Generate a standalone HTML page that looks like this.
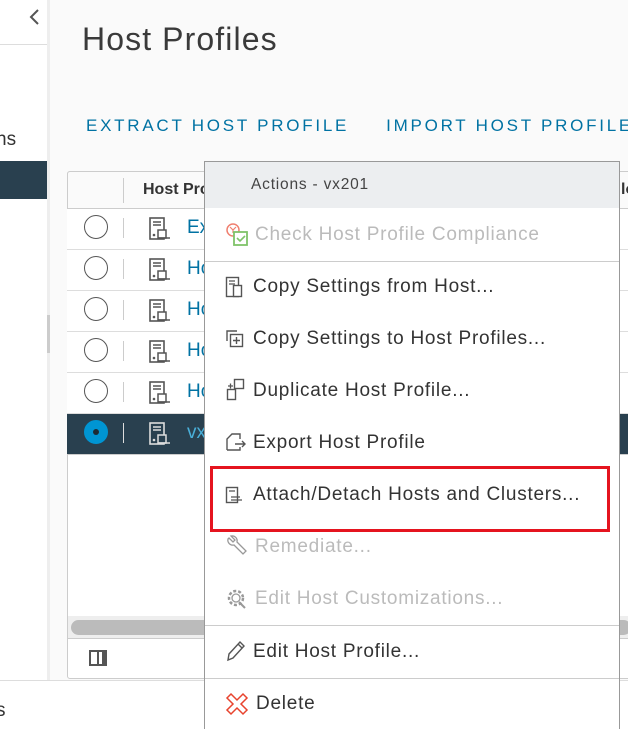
<!DOCTYPE html>
<html style="overflow:hidden;height:729px"><head><style>
*{margin:0;padding:0;box-sizing:border-box}
body{width:628px;height:729px;overflow:hidden;background:#fafafa;font-family:"Liberation Sans",sans-serif;position:relative;color:#333}
.abs{position:absolute}
.side{left:0;top:0;width:47px;height:680px;background:#fff}
.row{position:absolute;left:67px;width:600px;height:41px;border-bottom:1px solid #ddd;background:#fff}
.radio{position:absolute;left:17px;top:6px;width:24px;height:24px;border:1px solid #555;border-radius:50%;background:#fff}
.vsep{position:absolute;left:56px;top:9px;width:1px;height:20px;background:#ccc}
.hicon{position:absolute;left:81px;top:7px}
.rtext{position:absolute;left:120px;top:8px;font-size:19px;color:#0072a3}
.menu{left:204px;top:161px;width:416px;height:568px;background:#fff;border:1px solid #999;border-bottom:none;overflow:hidden}
.mi{position:absolute;left:48px;font-size:19px;letter-spacing:0.75px;color:#333;white-space:nowrap;margin-top:1px}
.dis{color:#bbb}
.ic{position:absolute;left:20px}
.sep{position:absolute;left:0;right:0;height:1px;background:#ccc}
</style></head><body>
<div class="abs side"></div>
<div class="abs" style="left:0;top:44px;width:47px;height:1px;background:#ddd"></div>
<svg class="abs" style="left:28px;top:8px" width="14" height="18"><path d="M10 2 L3 9 L10 16" stroke="#555" stroke-width="2" fill="none"/></svg>
<div class="abs" style="left:-4px;top:129px;font-size:19px;color:#333">ns</div>
<div class="abs" style="left:0;top:161px;width:47px;height:38px;background:#29404f"></div>
<div class="abs" style="left:47px;top:0;width:3px;height:680px;background:#eee"></div>
<div class="abs" style="left:47px;top:315px;width:3px;height:38px;background:#ccc"></div>
<div class="abs" style="left:82px;top:21px;font-size:32px;color:#3a3a3a;letter-spacing:1.1px">Host Profiles</div>
<div class="abs" style="left:86px;top:116px;font-size:17px;color:#0072a3;letter-spacing:2.75px;white-space:nowrap">EXTRACT HOST PROFILE<span style="margin-left:37px">IMPORT HOST PROFILE</span></div>
<div class="abs" style="left:67px;top:171px;width:600px;height:508px;background:#fff;border:1px solid #ccc;border-radius:3px"></div>
<div class="abs" style="left:67px;top:171px;width:600px;height:38px;background:#fafafa;border:1px solid #ccc;border-radius:3px 3px 0 0"></div>
<div class="abs" style="left:123px;top:178px;width:1px;height:25px;background:#ccc"></div>
<div class="abs" style="left:143px;top:181px;font-size:16px;font-weight:bold;color:#333">Host Profile</div>
<div class="abs" style="left:621px;top:181px;font-size:16px;font-weight:bold;color:#333">lo</div>

<div class="row" style="top:209px"><div class="radio"></div><div class="vsep"></div><svg class="hicon" width="24" height="26"><rect x="2" y="2" width="14" height="21" fill="none" stroke="#555" stroke-width="1.6"/><path d="M5 6h8M5 9h8" stroke="#555" stroke-width="1.5"/><circle cx="6" cy="19" r="1.3" fill="#555"/><rect x="10" y="14" width="8" height="8" fill="#fff" stroke="#555" stroke-width="1.5"/><path d="M10 22h12" stroke="#555" stroke-width="1.5"/></svg><div class="rtext">Ex</div></div>
<div class="row" style="top:250px"><div class="radio"></div><div class="vsep"></div><svg class="hicon" width="24" height="26"><rect x="2" y="2" width="14" height="21" fill="none" stroke="#555" stroke-width="1.6"/><path d="M5 6h8M5 9h8" stroke="#555" stroke-width="1.5"/><circle cx="6" cy="19" r="1.3" fill="#555"/><rect x="10" y="14" width="8" height="8" fill="#fff" stroke="#555" stroke-width="1.5"/><path d="M10 22h12" stroke="#555" stroke-width="1.5"/></svg><div class="rtext">Ho</div></div>
<div class="row" style="top:291px"><div class="radio"></div><div class="vsep"></div><svg class="hicon" width="24" height="26"><rect x="2" y="2" width="14" height="21" fill="none" stroke="#555" stroke-width="1.6"/><path d="M5 6h8M5 9h8" stroke="#555" stroke-width="1.5"/><circle cx="6" cy="19" r="1.3" fill="#555"/><rect x="10" y="14" width="8" height="8" fill="#fff" stroke="#555" stroke-width="1.5"/><path d="M10 22h12" stroke="#555" stroke-width="1.5"/></svg><div class="rtext">Ho</div></div>
<div class="row" style="top:332px"><div class="radio"></div><div class="vsep"></div><svg class="hicon" width="24" height="26"><rect x="2" y="2" width="14" height="21" fill="none" stroke="#555" stroke-width="1.6"/><path d="M5 6h8M5 9h8" stroke="#555" stroke-width="1.5"/><circle cx="6" cy="19" r="1.3" fill="#555"/><rect x="10" y="14" width="8" height="8" fill="#fff" stroke="#555" stroke-width="1.5"/><path d="M10 22h12" stroke="#555" stroke-width="1.5"/></svg><div class="rtext">Ho</div></div>
<div class="row" style="top:373px"><div class="radio"></div><div class="vsep"></div><svg class="hicon" width="24" height="26"><rect x="2" y="2" width="14" height="21" fill="none" stroke="#555" stroke-width="1.6"/><path d="M5 6h8M5 9h8" stroke="#555" stroke-width="1.5"/><circle cx="6" cy="19" r="1.3" fill="#555"/><rect x="10" y="14" width="8" height="8" fill="#fff" stroke="#555" stroke-width="1.5"/><path d="M10 22h12" stroke="#555" stroke-width="1.5"/></svg><div class="rtext">Ho</div></div>
<div class="row" style="top:414px;background:#29404f;border-bottom:1px solid #ccc"><div class="radio" style="background:#0095d3;border-color:#0095d3"><div style="position:absolute;left:8px;top:8px;width:6px;height:6px;border-radius:50%;background:#1d2a33"></div></div><div class="vsep" style="background:#ddd"></div><svg class="hicon" width="24" height="26"><rect x="2" y="2" width="14" height="21" fill="none" stroke="#ddd" stroke-width="1.6"/><path d="M5 6h8M5 9h8" stroke="#ddd" stroke-width="1.5"/><circle cx="6" cy="19" r="1.3" fill="#ddd"/><rect x="10" y="14" width="8" height="8" fill="#29404f" stroke="#ddd" stroke-width="1.5"/><path d="M10 22h12" stroke="#ddd" stroke-width="1.5"/></svg><div class="rtext" style="color:#49afd9">vx</div></div>

<div class="abs" style="left:68px;top:616px;width:598px;height:22px;background:#eee"></div>
<div class="abs" style="left:71px;top:620px;width:560px;height:15px;background:#bbb;border-radius:8px"></div>
<div class="abs" style="left:68px;top:638px;width:598px;height:1px;background:#ccc"></div>
<div class="abs" style="left:89px;top:650px;width:18px;height:16px;border:2px solid #555;background:linear-gradient(90deg,#fff 0,#fff 6px,#555 6px,#555 8px,#fff 8px,#fff 11px,#555 11px)"></div>
<div class="abs" style="left:0;top:680px;width:628px;height:49px;background:#fff;border-top:1px solid #ddd"></div>
<div class="abs" style="left:-4px;top:700px;font-size:19px;color:#333">s</div>

<div class="abs menu">
 <div style="position:absolute;left:0;top:0;right:0;height:46px;background:#eceef0"></div>
 <div style="position:absolute;left:46px;top:14px;font-size:15.5px;letter-spacing:0.8px;color:#444">Actions - vx201</div>
 <svg class="ic" style="top:60px" width="26" height="26"><circle cx="8" cy="8" r="6" fill="none" stroke="#f08070" stroke-width="1.5"/><path d="M5 5l3 3 3-3M8 8v3" stroke="#f08070" stroke-width="1.2" fill="none"/><rect x="9" y="10" width="13" height="13" fill="#fff" stroke="#7fc36a" stroke-width="1.8"/><path d="M12 16l3 3 5-5" stroke="#7fc36a" stroke-width="1.6" fill="none"/></svg>
 <div class="mi dis" style="top:61px;left:50px">Check Host Profile Compliance</div>
 <div class="sep" style="top:99px"></div>
 <svg class="ic" style="top:114px" width="22" height="24"><rect x="1.5" y="1.5" width="12" height="19" fill="none" stroke="#555" stroke-width="1.4"/><path d="M4 5h6M4 8h6" stroke="#555" stroke-width="1.3"/><rect x="8.5" y="9.5" width="8" height="11" fill="#fff" stroke="#555" stroke-width="1.4"/></svg>
 <div class="mi" style="top:113px">Copy Settings from Host...</div>
 <svg class="ic" style="top:167px" width="22" height="22"><path d="M2 12V2h10" fill="none" stroke="#555" stroke-width="1.4"/><rect x="5.5" y="5.5" width="12" height="12" fill="#fff" stroke="#555" stroke-width="1.4"/><path d="M11.5 8v7M8 11.5h7" stroke="#555" stroke-width="1.4"/></svg>
 <div class="mi" style="top:165px">Copy Settings to Host Profiles...</div>
 <svg class="ic" style="top:216px" width="22" height="24"><rect x="9.5" y="1.5" width="9" height="9" fill="none" stroke="#555" stroke-width="1.4"/><rect x="2.5" y="11.5" width="8" height="10" fill="none" stroke="#555" stroke-width="1.4"/><path d="M3 8h5M5.5 5.5v5" stroke="#555" stroke-width="1.3"/></svg>
 <div class="mi" style="top:217px">Duplicate Host Profile...</div>
 <svg class="ic" style="top:270px" width="22" height="22"><path d="M2 18V7l5-5h8v5M2 18h13v-3" fill="none" stroke="#555" stroke-width="1.4"/><path d="M10 12h10M17 9l3 3-3 3" fill="none" stroke="#555" stroke-width="1.4"/></svg>
 <div class="mi" style="top:269px">Export Host Profile</div>
 <svg class="ic" style="top:323px" width="22" height="22"><rect x="1.5" y="2.5" width="11" height="15" fill="none" stroke="#555" stroke-width="1.4"/><path d="M4 6h6M6 12h9M6 15h11" stroke="#555" stroke-width="1.3"/></svg>
 <div class="mi" style="top:321px">Attach/Detach Hosts and Clusters...</div>
 <svg class="ic" style="top:372px" width="24" height="26"><path d="M4 4l4 4 2-2-4-4a5 5 0 0 1 6 6l9 9-3 3-9-9a5 5 0 0 1-6-6z" fill="none" stroke="#999" stroke-width="1.3"/></svg>
 <div class="mi dis" style="top:373px;left:50px">Remediate...</div>
 <svg class="ic" style="top:424px" width="24" height="26"><circle cx="11" cy="12" r="7" fill="none" stroke="#999" stroke-width="2.5" stroke-dasharray="3 2"/><circle cx="11" cy="12" r="4" fill="none" stroke="#999" stroke-width="1.3"/><path d="M14 16l6 6" stroke="#999" stroke-width="2"/></svg>
 <div class="mi dis" style="top:425px;left:50px">Edit Host Customizations...</div>
 <div class="sep" style="top:463px"></div>
 <svg class="ic" style="top:477px" width="22" height="24"><path d="M3 21l1-6L15 3l4 4L8 19z M13 5l4 4" fill="none" stroke="#555" stroke-width="1.4"/></svg>
 <div class="mi" style="top:478px">Edit Host Profile...</div>
 <div class="sep" style="top:516px"></div>
 <svg class="ic" style="top:530px" width="24" height="24"><path d="M6 2l6 6 6-6 4 4-6 6 6 6-4 4-6-6-6 6-4-4 6-6-6-6z" fill="none" stroke="#e8432e" stroke-width="1.5"/></svg>
 <div class="mi" style="top:530px;left:51px">Delete</div>
</div>
<div class="abs" style="left:210px;top:466px;width:400px;height:66px;border:3px solid #e5141f"></div>
</body></html>
